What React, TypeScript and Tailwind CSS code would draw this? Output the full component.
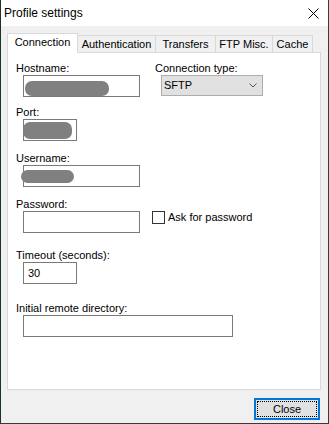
import { useState } from 'react';

const tabs = ['Connection', 'Authentication', 'Transfers', 'FTP Misc.', 'Cache'];
const tabWidths = ['w-[71px]', 'w-[78px]', 'w-[60px]', 'w-[57px]', 'w-[40px]'];

function Field({ label, width, children }: { label: string; width: string; children?: React.ReactNode }) {
  return (
    <div className="flex flex-col">
      <div className="h-[13px] whitespace-nowrap">{label}</div>
      <div className={`relative ml-[7px] h-[22px] ${width} border border-[#7a7a7a] bg-white`}>{children}</div>
    </div>
  );
}

function Blob({ className }: { className: string }) {
  return <div className={`absolute rounded-[7px] bg-[#808080] ${className}`} />;
}

export default function App() {
  const [askPass, setAskPass] = useState(false);

  return (
    <div className="flex h-[424px] w-[329px] flex-col border-b border-l border-r border-b-[#3a3a3a] border-l-[#1c3320] border-r-[#3a3a3a] bg-[#f0f0f0] font-['Liberation_Sans',Arial,sans-serif] text-[11px] leading-[13px] text-black">
      {/* title bar */}
      <div className="flex h-[26px] shrink-0 items-center justify-between bg-white pl-[3px] pr-[9px]">
        <span className="text-[12px] leading-[14px]">Profile settings</span>
        <svg width="11" height="11" viewBox="0 0 11 11">
          <path d="M0.5 0.5L10.5 10.5M10.5 0.5L0.5 10.5" stroke="#000" strokeWidth="1" />
        </svg>
      </div>

      <div className="flex flex-1 flex-col px-[6px] pt-[7px]">
        {/* tabs */}
        <div className="flex h-[19px] items-end">
          {tabs.map((t, i) =>
            i === 0 ? (
              <div
                key={t}
                className={`relative z-10 -mb-px flex h-[20px] items-center justify-center border-x border-t border-[#d9d9d9] bg-white pb-[2px] ${tabWidths[i]}`}
              >
                {t}
              </div>
            ) : (
              <div
                key={t}
                className={`flex h-[17px] items-center justify-center border-r border-t border-[#d9d9d9] bg-[#f0f0f0] ${tabWidths[i]}`}
              >
                {t}
              </div>
            )
          )}
        </div>

        {/* panel */}
        <div className="h-[338px] w-[314px] border border-[#d9d9d9] bg-white pl-[8px] pt-[9px]">
          <div className="flex">
            <div className="w-[139px]">
              <Field label="Hostname:" width="w-[117px]">
                <Blob className="left-[1px] top-[5px] h-[15px] w-[84px]" />
              </Field>
            </div>
            <div className="flex flex-col">
              <div className="h-[13px]">Connection type:</div>
              <div className="ml-[6px] flex h-[21px] w-[102px] items-center justify-between border border-[#adadad] bg-[#e1e1e1] pl-[2px] pr-[5px]">
                <span>SFTP</span>
                <svg width="8" height="5" viewBox="0 0 8 5">
                  <path d="M0.5 0.5L4 4L7.5 0.5" fill="none" stroke="#555" strokeWidth="1" />
                </svg>
              </div>
            </div>
          </div>

          <div className="mt-[9px]">
            <Field label="Port:" width="w-[54px]">
              <Blob className="-left-px top-[2px] h-[17px] w-[49px]" />
            </Field>
          </div>

          <div className="mt-[11px]">
            <Field label="Username:" width="w-[117px]">
              <Blob className="-left-[3px] top-[4px] h-[13px] w-[53px]" />
            </Field>
          </div>

          <div className="mt-[11px] flex flex-col">
            <div className="h-[13px]">Password:</div>
            <div className="flex items-start">
              <div className="ml-[7px] h-[22px] w-[117px] border border-[#7a7a7a] bg-white" />
              <label className="-mt-px ml-[12px] flex cursor-default items-center gap-[3px]" onClick={() => setAskPass(!askPass)}>
                <span className="flex h-[13px] w-[13px] items-center justify-center border border-[#333] bg-white">
                  {askPass && (
                    <svg width="9" height="8" viewBox="0 0 9 8">
                      <path d="M1 4L3.5 6.5L8 1" fill="none" stroke="#000" strokeWidth="1.3" />
                    </svg>
                  )}
                </span>
                <span className="pt-px">Ask for password</span>
              </label>
            </div>
          </div>

          <div className="mt-[16px]">
            <Field label="Timeout (seconds):" width="w-[54px]">
              <span className="absolute left-[4px] top-[4px]">30</span>
            </Field>
          </div>

          <div className="mt-[18px]">
            <Field label="Initial remote directory:" width="w-[210px]" />
          </div>
        </div>

        {/* footer */}
        <div className="flex w-[314px] justify-end pr-px pt-[8px]">
          <button className="h-[22px] w-[66px] border-2 border-[#0078d7] bg-[#e1e1e1] p-px">
            <span className="flex h-full w-full items-center justify-center border border-dotted border-black">Close</span>
          </button>
        </div>
      </div>
    </div>
  );
}
